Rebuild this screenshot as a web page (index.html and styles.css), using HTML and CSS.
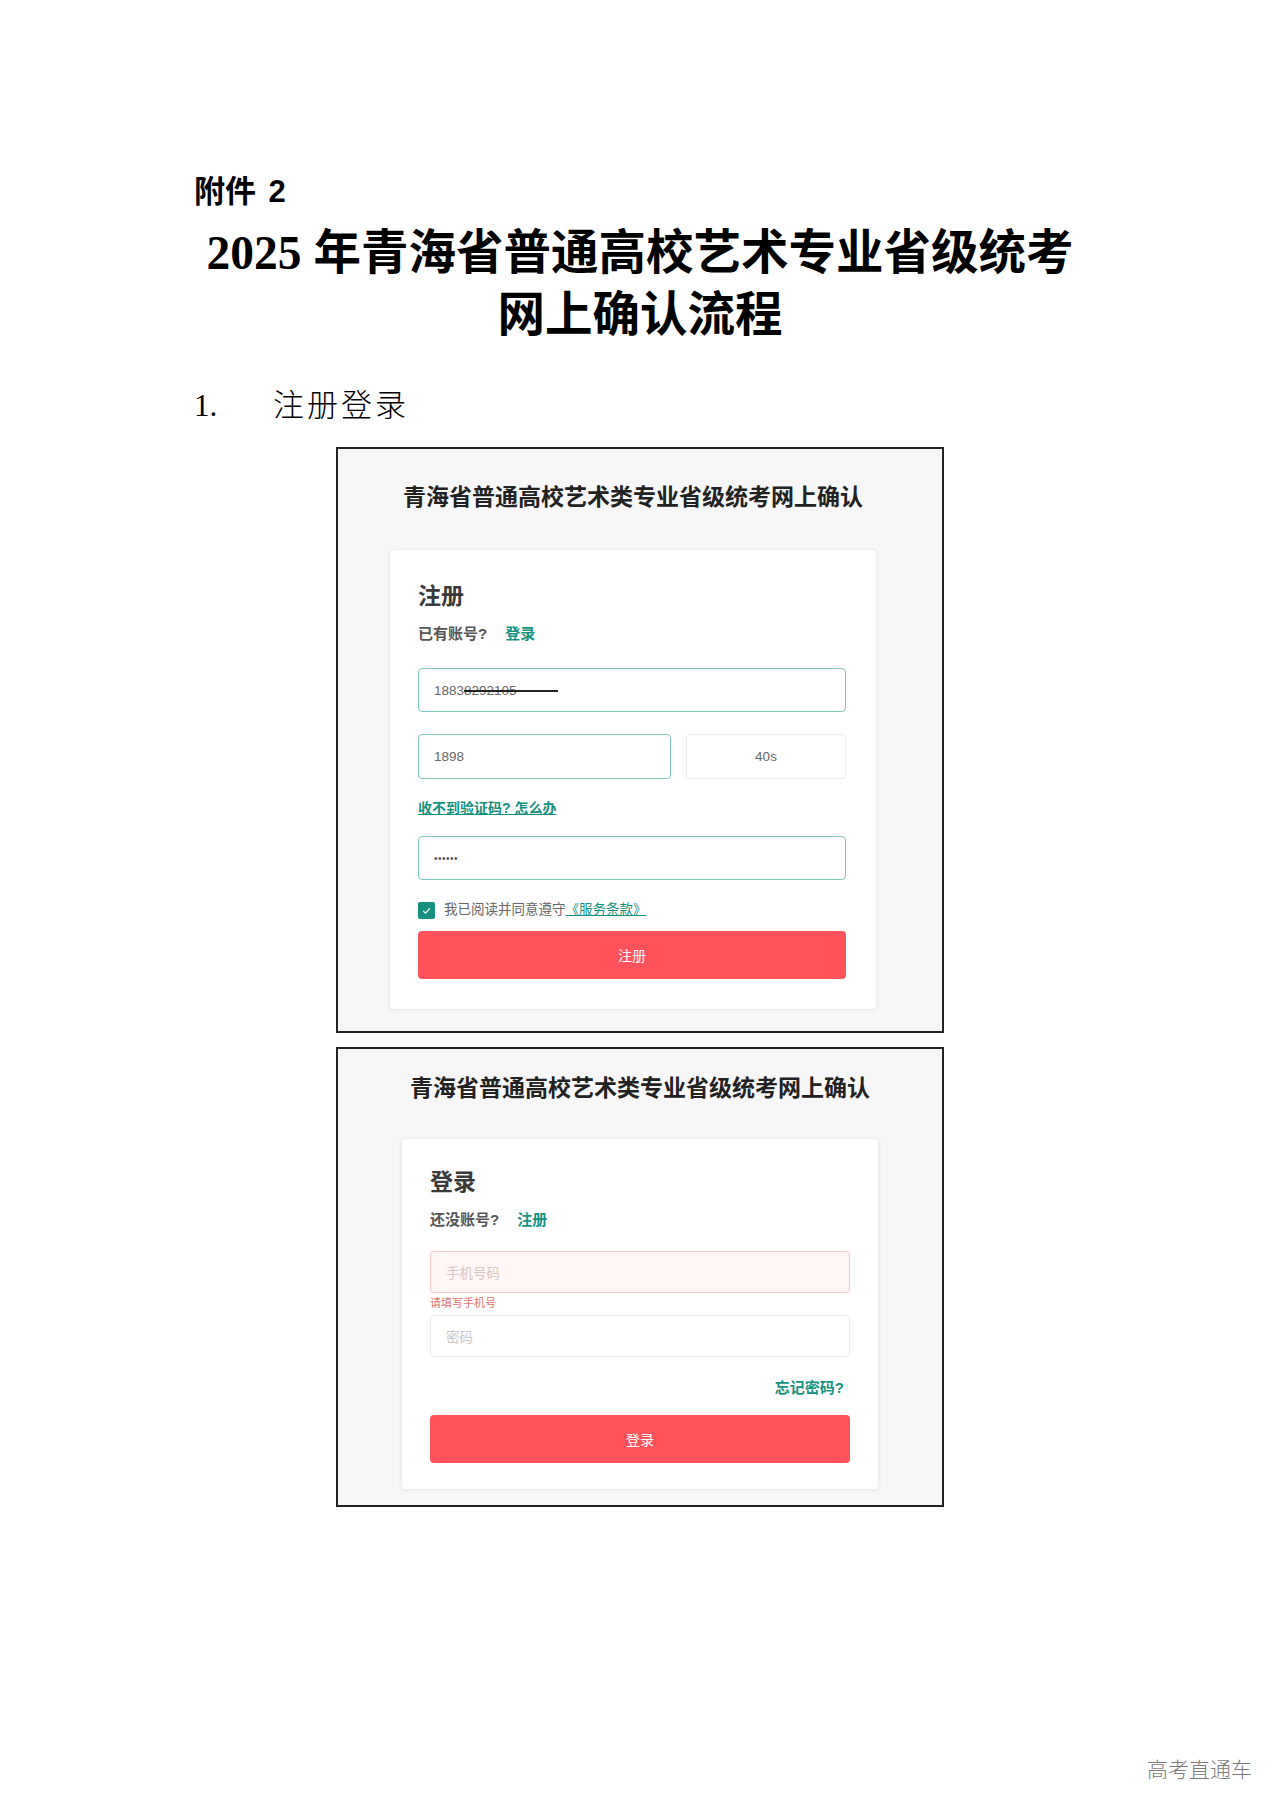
FILE: index.html
```html
<!DOCTYPE html>
<html lang="zh-CN">

<head>
    <meta charset="UTF-8">
    <meta name="viewport" content="width=device-width, initial-scale=1.0">
    <title>2025年青海省普通高校艺术专业省级统考网上确认流程</title>
    <link rel="stylesheet" href="styles.css">
</head>

<body>

    <div class="page">
        <div class="doc">
            <p class="annex">附件 2</p>
            <h1 class="title">2025 年青海省普通高校艺术专业省级统考<br>网上确认流程</h1>
            <h2 class="step"><span class="step-num">1.</span>注册登录</h2>
        </div>

        <!-- Screenshot: register -->
        <div class="shot shot-reg">
            <div class="shot-title">青海省普通高校艺术类专业省级统考网上确认</div>
            <div class="card">
                <h3 class="card-title">注册</h3>
                <p class="switch">已有账号?<a href="#">登录</a></p>
                <div class="field field-ok field-phone">1883<span class="redact">8292105</span></div>
                <div class="code-row">
                    <div class="field field-ok field-code">1898</div>
                    <div class="field countdown">40s</div>
                </div>
                <a class="help" href="#">收不到验证码? 怎么办</a>
                <div class="field field-ok field-pass">••••••</div>
                <div class="agree">
                    <span class="check">
                        <svg width="17" height="17" viewBox="0 0 17 17"><path d="M5.2 8.9l2.3 2.3 4.4-4.8" fill="none" stroke="#fff" stroke-width="1.2"/></svg>
                    </span>
                    <span>我已阅读并同意遵守<a href="#">《服务条款》</a></span>
                </div>
                <button class="btn">注册</button>
            </div>
        </div>

        <!-- Screenshot: login -->
        <div class="shot shot-login">
            <div class="shot-title">青海省普通高校艺术类专业省级统考网上确认</div>
            <div class="card">
                <h3 class="card-title">登录</h3>
                <p class="switch">还没账号?<a href="#">注册</a></p>
                <div class="field field-error">手机号码</div>
                <p class="error-msg">请填写手机号</p>
                <div class="field field-plain">密码</div>
                <p class="forgot"><a href="#">忘记密码?</a></p>
                <button class="btn btn-login">登录</button>
            </div>
        </div>

        <div class="watermark">高考直通车</div>
    </div>

</body>

</html>
```

FILE: styles.css
```css
/* General Styles */

body {
    margin: 0;
    padding: 0;
    background-color: #fff;
    font-family: "Liberation Sans", "Noto Sans CJK SC", sans-serif;
    color: #000;
}

.page {
    width: 1280px;
    min-height: 1810px;
    box-sizing: border-box;
    padding-top: 174px;
    display: flex;
    flex-direction: column;
}

.doc {
    padding: 0 194px;
}

.annex {
    margin: 0;
    font-size: 31px;
    line-height: 36px;
    font-weight: 700;
    word-spacing: 4px;
}

.title {
    margin: 12px 0 0;
    text-align: center;
    font-family: "Liberation Serif", "Noto Sans CJK SC", serif;
    font-size: 47.5px;
    line-height: 62px;
    font-weight: 700;
}

.step {
    margin: 40px 0 0;
    font-family: "Liberation Serif", "Noto Sans CJK SC", serif;
    font-size: 31px;
    line-height: 40px;
    font-weight: 300;
    letter-spacing: 3px;
}

.step-num {
    display: inline-block;
    width: 79px;
    letter-spacing: 0;
}

/* Screenshot frames */

.shot {
    width: 608px;
    margin: 21px auto 0;
    box-sizing: border-box;
    border: 2px solid #222;
    background-color: #f7f7f7;
}

.shot-reg {
    padding: 33px 65px 21px 51px;
}

.shot-login {
    margin-top: 14px;
    padding: 24px 63px 15px;
}

.shot-title {
    text-align: center;
    font-size: 23px;
    line-height: 30px;
    font-weight: 700;
    color: #222;
}

.card {
    background-color: #fff;
    border: 1px solid #ededed;
    border-radius: 4px;
    box-shadow: 0 1px 4px rgba(0, 0, 0, 0.05);
}

.shot-reg .card {
    margin-top: 37px;
    padding: 31px 30px 30px 28px;
}

.shot-login .card {
    margin-top: 35px;
    padding: 28px 28px 26px;
}

.card-title {
    margin: 0;
    font-size: 23px;
    line-height: 30px;
    font-weight: 700;
    color: #3a3a3a;
}

.switch {
    margin: 13px 0 0;
    font-size: 15px;
    line-height: 20px;
    font-weight: 700;
    color: #555;
}

.switch a {
    margin-left: 18px;
    color: #14917f;
    text-decoration: none;
}

.field {
    box-sizing: border-box;
    height: 44px;
    padding: 0 15px;
    display: flex;
    align-items: center;
    border: 1px solid #80c6bd;
    border-radius: 4px;
    background-color: #fff;
    font-size: 13.5px;
    color: #666;
}

.field-phone {
    margin-top: 24px;
}

.redact {
    position: relative;
}

.redact::after {
    content: "";
    position: absolute;
    left: 0;
    right: -41px;
    top: 50%;
    height: 1.5px;
    background-color: #222;
}

.code-row {
    display: flex;
    gap: 15px;
    margin-top: 22px;
}

.code-row .field {
    height: 45px;
}

.field-code {
    width: 253px;
}

.countdown {
    flex: 1;
    justify-content: center;
    border-color: #ececec;
    color: #666;
}

.help {
    display: block;
    margin-top: 19px;
    font-size: 14px;
    line-height: 20px;
    font-weight: 700;
    color: #14917f;
}

.field-pass {
    margin-top: 18px;
    font-size: 10px;
    letter-spacing: 0.5px;
    color: #555;
}

.agree {
    display: flex;
    align-items: center;
    gap: 9px;
    margin-top: 20px;
    font-size: 13.5px;
    line-height: 20px;
    color: #666;
}

.agree a {
    color: #14917f;
}

.check {
    width: 17px;
    height: 17px;
    border-radius: 2px;
    background-color: #16907f;
    display: flex;
}

.btn {
    display: block;
    width: 100%;
    height: 48px;
    margin-top: 11px;
    border: none;
    border-radius: 4px;
    background-color: #ff525a;
    color: #fff;
    font-family: "Liberation Sans", "Noto Sans CJK SC", sans-serif;
    font-size: 14px;
}

/* Login form */

.shot-login .field {
    height: 42px;
}

.field-error {
    margin-top: 21px;
    background-color: #fff6f5;
    border-color: #f1c8c5;
    color: #d6c8c8;
}

.error-msg {
    margin: 3px 0 0;
    font-size: 11px;
    line-height: 14px;
    color: #e0716f;
}

.field-plain {
    margin-top: 5px;
    border-color: #ececec;
    color: #c8c8c8;
}

.forgot {
    margin: 21px 0 0;
    padding-right: 6px;
    text-align: right;
    font-size: 15px;
    line-height: 20px;
    font-weight: 700;
}

.forgot a {
    color: #14917f;
    text-decoration: none;
}

.btn-login {
    margin-top: 17px;
}

.watermark {
    margin-top: auto;
    align-self: flex-end;
    padding: 0 28px 26px 0;
    font-size: 21px;
    line-height: 28px;
    font-weight: 300;
    color: #7a7a7a;
}
```
